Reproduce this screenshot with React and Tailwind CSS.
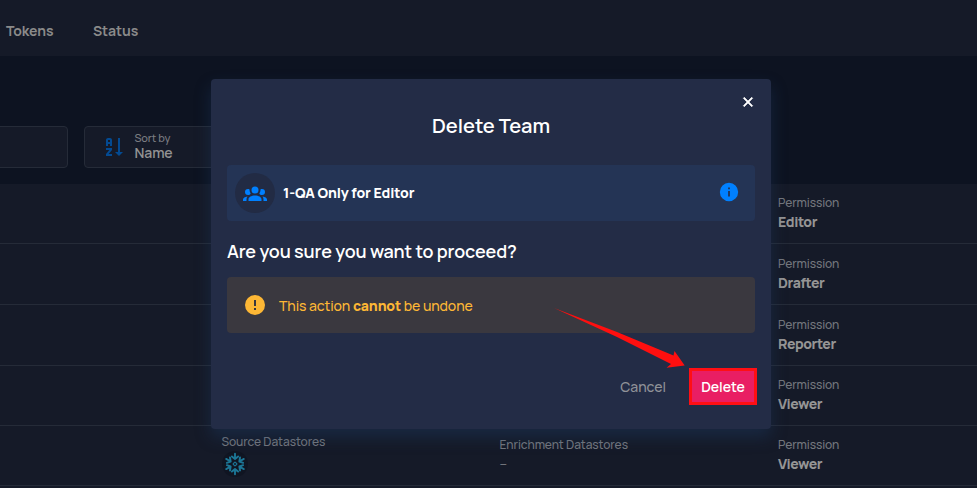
import React from "react";

const GROUP =
  "M12,5.5A3.5,3.5 0 0,1 15.5,9A3.5,3.5 0 0,1 12,12.5A3.5,3.5 0 0,1 8.5,9A3.5,3.5 0 0,1 12,5.5M5,8C5.56,8 6.08,8.15 6.53,8.42C6.38,9.85 6.8,11.27 7.66,12.38C7.16,13.34 6.16,14 5,14A3,3 0 0,1 2,11A3,3 0 0,1 5,8M19,8A3,3 0 0,1 22,11A3,3 0 0,1 19,14C17.84,14 16.84,13.34 16.34,12.38C17.2,11.27 17.62,9.85 17.47,8.42C17.92,8.15 18.44,8 19,8M5.5,18.25C5.5,16.18 8.41,14.5 12,14.5C15.59,14.5 18.5,16.18 18.5,18.25V20H5.5V18.25M0,20V18.5C0,17.11 1.89,15.94 4.45,15.6C3.86,16.28 3.5,17.22 3.5,18.25V20H0M24,20H20.5V18.25C20.5,17.22 20.14,16.28 19.55,15.6C22.11,15.94 24,17.11 24,18.5V20Z";
const SORT =
  "M19 17H22L18 21L14 17H17V3H19V17M11 13V15L7.67 19H11V21H5V19L8.33 15H5V13H11M9 3H7C5.9 3 5 3.9 5 5V11H7V9H9V11H11V5C11 3.9 10.1 3 9 3M9 7H7V5H9V7Z";
const INFO =
  "M13,9H11V7H13M13,17H11V11H13M12,2A10,10 0 0,0 2,12A10,10 0 0,0 12,22A10,10 0 0,0 22,12A10,10 0 0,0 12,2Z";
const ALERT =
  "M13,13H11V7H13M13,17H11V15H13M12,2A10,10 0 0,0 2,12A10,10 0 0,0 12,22A10,10 0 0,0 22,12A10,10 0 0,0 12,2Z";
const CLOSE =
  "M19,6.41L17.59,5L12,10.59L6.41,5L5,6.41L10.59,12L5,17.59L6.41,19L12,13.41L17.59,19L19,17.59L13.41,12L19,6.41Z";

function Icon({ d, className }) {
  return (
    <svg viewBox="0 0 24 24" fill="currentColor" className={className}>
      <path d={d} />
    </svg>
  );
}

function Snowflake({ className }) {
  return (
    <svg viewBox="-12 -12 24 24" fill="none" stroke="currentColor" strokeLinecap="round" strokeLinejoin="round" className={className}>
      <rect x="-1.5" y="-1.5" width="3" height="3" rx="0.6" strokeWidth="1.2" transform="rotate(45)" />
      {[0, 60, 120, 180, 240, 300].map((angle) => (
        <path key={angle} d="M0 -5V-10.2M-3.1 -7.6L0 -5L3.1 -7.6" strokeWidth="1.9" transform={`rotate(${angle})`} />
      ))}
    </svg>
  );
}

const rows = [
  { role: "Editor", size: "h-[60px] pt-[10px]" },
  { role: "Drafter", size: "h-[61px] pt-[11px]" },
  { role: "Reporter", size: "h-[61px] pt-[11px]" },
  { role: "Viewer", size: "h-[60px] pt-[10px]" },
  { role: "Viewer", size: "h-[60px] pt-[10px]", stores: true },
];

function Row({ role, size, stores }) {
  return (
    <div className={`flex border-b border-[#252b38] bg-[#151a28] text-[#74777e] ${size}`}>
      <div className="w-[221.5px] shrink-0" />
      <div className="w-[278px] shrink-0">
        {stores && (
          <div className="-mt-[3px]">
            <div className="text-xs font-medium leading-[18px] tracking-[-0.08px]">Source Datastores</div>
            <div className="flex size-[26px] items-center justify-center rounded-full bg-[#101522]">
              <Snowflake className="size-[24px] text-[#1c7696]" />
            </div>
          </div>
        )}
      </div>
      <div className="w-[278.5px] shrink-0">
        {stores && (
          <>
            <div className="text-xs font-medium leading-[18px] tracking-[-0.08px]">Enrichment Datastores</div>
            <div className="text-sm leading-5">–</div>
          </>
        )}
      </div>
      <div>
        <div className="text-xs font-medium leading-[18px] tracking-[-0.12px]">Permission</div>
        <div className="text-sm font-extrabold leading-5 tracking-[-0.4px] text-[#959595]">{role}</div>
      </div>
    </div>
  );
}

function Dialog() {
  return (
    <div className="absolute left-[211px] top-[79px] flex h-[350px] w-[560px] flex-col rounded bg-[#232c46] px-4 text-white shadow-[0_8px_16px_rgba(31,62,104,0.4)]">
      <div className="flex h-[34px] items-end justify-end">
        <button className="-mr-px mb-[3px]">
          <Icon d={CLOSE} className="size-4 stroke-white stroke-1" />
        </button>
      </div>
      <h2 className="text-center text-xl font-semibold leading-[26px]">Delete Team</h2>
      <div className="mt-[26px] flex h-14 shrink-0 items-center rounded bg-[#243455] pl-2 pr-4">
        <div className="flex size-10 items-center justify-center rounded-full bg-[#222b44]">
          <Icon d={GROUP} className="size-6 text-[#0080ff]" />
        </div>
        <div className="ml-2 flex-1 text-sm font-extrabold tracking-[-0.1px]">1-QA Only for Editor</div>
        <Icon d={INFO} className="-mt-0.5 -mr-px size-[22px] text-[#0080ff]" />
      </div>
      <p className="mt-4 text-lg font-semibold leading-7 tracking-[-0.13px]">Are you sure you want to proceed?</p>
      <div className="mt-3 flex h-14 shrink-0 items-center rounded bg-[#3a383f] pl-4 text-[#fdb735]">
        <Icon d={ALERT} className="size-6" />
        <div className="ml-3 mt-0.5 text-sm font-medium tracking-[-0.11px]">
          This action <b className="font-extrabold">cannot</b> be undone
        </div>
      </div>
      <div className="mt-[35px] flex items-center justify-end text-sm">
        <button className="mr-[23px] font-medium text-[#909298]">Cancel</button>
        <button className="-mr-0.5 h-[37px] w-[68px] border-3 border-[#ff0f14] bg-[#e91e63] font-semibold tracking-[-0.1px]">Delete</button>
      </div>
    </div>
  );
}

export default function App() {
  return (
    <div className="relative h-[488px] w-[977px] overflow-hidden bg-[#0d1321] font-['Manrope',Inter,sans-serif]">
      <nav className="flex h-14 items-center gap-10 bg-[#151a28] pb-[3px] pl-1.5 pt-2 text-sm font-bold tracking-[-0.1px] text-[#8a8a8a]">
        <span className="w-[47px]">Tokens</span>
        <span>Status</span>
      </nav>
      <div className="flex gap-4 pb-4 pt-[70px]">
        <div className="-ml-1 h-[42px] w-[72px] rounded border border-[#252b38] bg-[#151a28]" />
        <div className="flex h-[42px] w-52 items-center rounded border border-[#252b38] bg-[#151a28] pl-4">
          <Icon d={SORT} className="size-6 text-[#034a92]" />
          <div className="-mt-1 ml-[9.5px]">
            <div className="text-[11px] font-medium leading-[15px] tracking-[-0.1px] text-[#7b7d82]">Sort by</div>
            <div className="text-sm font-semibold leading-[15px] tracking-[-0.1px] text-[#929292]">Name</div>
          </div>
        </div>
      </div>
      {rows.map((row, i) => (
        <Row key={i} {...row} />
      ))}
      <div className="h-2 bg-[#151a28]" />
      <Dialog />
      <svg viewBox="0 0 140 66" className="absolute left-[550px] top-[304px] h-[66px] w-[140px]">
        <path d="M4 4L67 28L123.5 51.5L124.5 47L134.7 61.5L116.5 63.7L121 60L67 33Z" fill="#ff0f0f" />
      </svg>
    </div>
  );
}
